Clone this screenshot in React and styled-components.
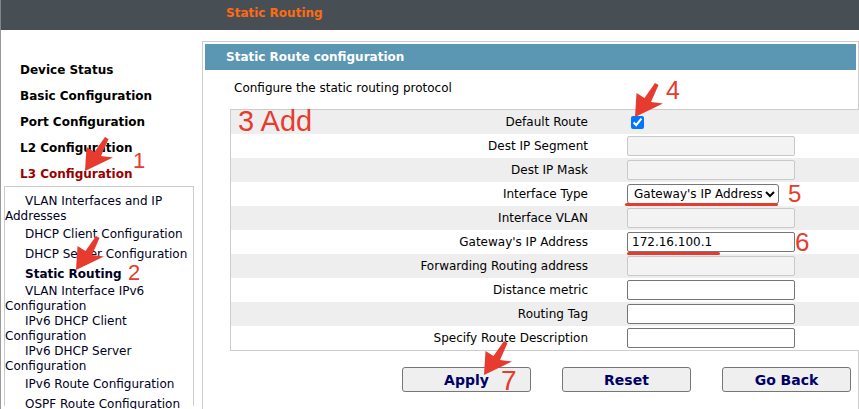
import React from 'react';
import styled, { createGlobalStyle } from 'styled-components';

const GlobalStyle = createGlobalStyle`
  html, body { margin: 0; padding: 0; background: #fff; }
  body {
    font-family: "DejaVu Sans", Verdana, sans-serif;
    font-size: 12px;
    color: #000;
  }
`;

const Page = styled.div`
  position: relative;
  width: 859px;
  height: 409px;
  overflow: hidden;
  background: #fff;
`;

const TopBar = styled.header`
  height: 30px;
  box-sizing: border-box;
  background: #474f55;
  border-left: 1px solid #80868b;
  padding: 6px 0 0 225px;
`;

const TopTitle = styled.h1`
  margin: 0;
  font-size: 12px;
  line-height: 14px;
  font-weight: bold;
  color: #ff6a12;
`;

const Body = styled.div`
  display: flex;
  align-items: flex-start;
  height: 379px;
  border-left: 1px solid #9a9a9a;
`;

const Sidebar = styled.nav`
  flex: none;
  width: 201px;
  padding-top: 27px;
  box-sizing: border-box;
`;

const MenuItem = styled.div`
  width: fit-content;
  padding-left: 19px;
  line-height: 26px;
  font-weight: bold;
  color: ${p => (p.$active ? '#990000' : '#000')};
`;

const SubMenu = styled.div`
  margin: -1px 0 0 3px;
  width: 190px;
  height: 220px;
  box-sizing: border-box;
  border: 1px solid #cccccc;
  border-bottom: none;
  padding-top: 7px;
`;

const SubItem = styled.div`
  display: flex;
  align-items: center;
  min-height: 20px;
`;

const SubLabel = styled.span`
  display: block;
  width: fit-content;
  text-indent: 20px;
  line-height: 15px;
  color: #000022;
  font-weight: ${p => (p.$current ? 'bold' : 'normal')};
`;

const Main = styled.main`
  flex: none;
  width: 657px;
  height: 380px;
  margin-top: 11px;
  box-sizing: border-box;
  border: 1px solid #cccccc;
  border-bottom: none;
  padding: 2px;
`;

const PanelHeader = styled.h2`
  margin: 0;
  height: 26px;
  line-height: 26px;
  padding-left: 21px;
  background: #5b96b2;
  color: #fff;
  font-size: 12px;
  font-weight: bold;
`;

const Intro = styled.p`
  margin: 11px 0 0 29px;
  line-height: 14px;
`;

const Table = styled.div`
  margin: 14px 0 0 25px;
  width: 640px;
  border: 1px solid #cccccc;
  border-right: none;
`;

const Row = styled.div`
  display: grid;
  grid-template-columns: 357px 1fr;
  align-items: center;
  height: 24px;
  background: ${p => (p.$alt ? '#eeeeee' : '#ffffff')};
`;

const Label = styled.div`
  text-align: right;
  line-height: 14px;
`;

const Value = styled.div`
  display: flex;
  align-items: center;
  padding-left: 39px;
  height: 24px;
`;

const TextBox = styled.input`
  width: 168px;
  height: 20px;
  box-sizing: border-box;
  margin: 0;
  padding: 1px 4px;
  border: 1px solid ${p => (p.disabled ? '#c9c9c9' : '#767676')};
  border-radius: 2px;
  background: ${p => (p.disabled ? '#f3f3f3' : '#ffffff')};
  font-family: "DejaVu Sans", Verdana, sans-serif;
  font-size: 12px;
  color: #000;
  outline: none;
`;

const Check = styled.input`
  margin: 3px 3px 3px 4px;
  width: 13px;
  height: 13px;
`;

const Select = styled.select`
  width: 152px;
  height: 20px;
  box-sizing: border-box;
  margin: 0;
  padding: 0 0 0 2px;
  border: 1px solid #767676;
  border-radius: 3px;
  background: #fff;
  font-family: "DejaVu Sans", Verdana, sans-serif;
  font-size: 12px;
  color: #000;
`;

const ButtonRow = styled.div`
  display: flex;
  gap: 31px;
  margin-top: 16px;
  padding-left: 197px;
`;

const Button = styled.button`
  width: 129px;
  height: 25px;
  box-sizing: border-box;
  padding: 0;
  background: #efefef;
  border: 1px solid #767676;
  border-radius: 3px;
  font-family: "DejaVu Sans", Verdana, sans-serif;
  font-size: 14px;
  font-weight: bold;
  color: #000066;
`;

/* red annotations drawn over the screenshot */
const Note = styled.span`
  position: absolute;
  left: ${p => p.$x}px;
  top: ${p => p.$y}px;
  font-family: "Liberation Sans", Arial, sans-serif;
  font-size: ${p => p.$size}px;
  line-height: 0.75;
  color: #e63b2e;
  white-space: nowrap;
`;

const Mark = styled.div`
  position: absolute;
  left: ${p => p.$x}px;
  top: ${p => p.$y}px;
  width: ${p => p.$w}px;
  height: 2.5px;
  border-radius: 2px;
  background: #e63b2e;
`;

const ArrowSvg = styled.svg`
  position: absolute;
  left: ${p => p.$x}px;
  top: ${p => p.$y}px;
  overflow: visible;
`;

const Arrow = ({ x, y }) => (
  <ArrowSvg $x={x} $y={y} width="36" height="42" viewBox="0 0 36 42">
    <polygon points="2,38 3.5,14 11.5,19 22,4 25.5,6 18,23 30,24.5" fill="#e63b2e" />
  </ArrowSvg>
);

const rows = [
  { label: 'Default Route', kind: 'check' },
  { label: 'Dest IP Segment', kind: 'disabled' },
  { label: 'Dest IP Mask', kind: 'disabled' },
  { label: 'Interface Type', kind: 'select' },
  { label: 'Interface VLAN', kind: 'disabled' },
  { label: "Gateway's IP Address", kind: 'text', value: '172.16.100.1' },
  { label: 'Forwarding Routing address', kind: 'disabled' },
  { label: 'Distance metric', kind: 'text', value: '' },
  { label: 'Routing Tag', kind: 'text', value: '' },
  { label: 'Specify Route Description', kind: 'text', value: '' },
];

const menu = [
  'Device Status',
  'Basic Configuration',
  'Port Configuration',
  'L2 Configuration',
  'L3 Configuration',
];

const subMenu = [
  'VLAN Interfaces and IP Addresses',
  'DHCP Client Configuration',
  'DHCP Server Configuration',
  'Static Routing',
  'VLAN Interface IPv6 Configuration',
  'IPv6 DHCP Client Configuration',
  'IPv6 DHCP Server Configuration',
  'IPv6 Route Configuration',
  'OSPF Route Configuration',
];

const renderValue = row => {
  const noop = () => {};
  switch (row.kind) {
    case 'check':
      return <Check type="checkbox" checked onChange={noop} />;
    case 'select':
      return (
        <Select value="gw" onChange={noop}>
          <option value="gw">Gateway's IP Address</option>
          <option value="vlan">VLAN Interface</option>
        </Select>
      );
    case 'disabled':
      return <TextBox type="text" disabled />;
    default:
      return <TextBox type="text" value={row.value} onChange={noop} />;
  }
};

export default function App() {
  return (
    <>
      <GlobalStyle />
      <Page>
        <TopBar>
          <TopTitle>Static Routing</TopTitle>
        </TopBar>
        <Body>
          <Sidebar>
            {menu.map(m => (
              <MenuItem key={m} $active={m === 'L3 Configuration'}>
                {m}
              </MenuItem>
            ))}
            <SubMenu>
              {subMenu.map(s => (
                <SubItem key={s}>
                  <SubLabel $current={s === 'Static Routing'}>{s}</SubLabel>
                </SubItem>
              ))}
            </SubMenu>
          </Sidebar>
          <Main>
            <PanelHeader>Static Route configuration</PanelHeader>
            <Intro>Configure the static routing protocol</Intro>
            <Table>
              {rows.map((r, i) => (
                <Row key={r.label} $alt={i % 2 === 0}>
                  <Label>{r.label}</Label>
                  <Value>{renderValue(r)}</Value>
                </Row>
              ))}
            </Table>
            <ButtonRow>
              <Button>Apply</Button>
              <Button>Reset</Button>
              <Button>Go Back</Button>
            </ButtonRow>
          </Main>
        </Body>

        <Arrow x={83} y={133} />
        <Note $x={133} $y={153} $size={22}>1</Note>
        <Arrow x={74} y={232} />
        <Note $x={128} $y={265} $size={22}>2</Note>
        <Note $x={238} $y={111} $size={29}>3 Add</Note>
        <Arrow x={633} y={79} />
        <Note $x={666} $y={81} $size={25}>4</Note>
        <Mark $x={625} $y={203} $w={153} />
        <Note $x={788} $y={185} $size={24}>5</Note>
        <Mark $x={627} $y={252} $w={93} />
        <Note $x={795} $y={233} $size={26}>6</Note>
        <Arrow x={482} y={337} />
        <Note $x={501} $y={370} $size={28}>7</Note>
      </Page>
    </>
  );
}
